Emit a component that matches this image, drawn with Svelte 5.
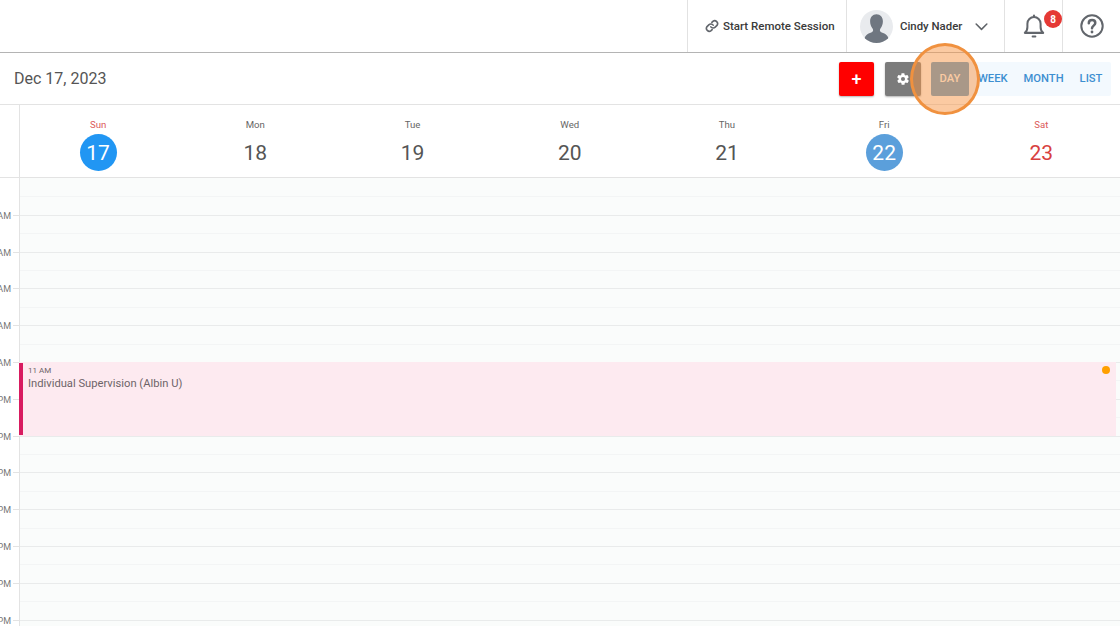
<script>
  const days = [
    { name: 'Sun', num: 17, kind: 'today', weekend: true },
    { name: 'Mon', num: 18 },
    { name: 'Tue', num: 19 },
    { name: 'Wed', num: 20 },
    { name: 'Thu', num: 21 },
    { name: 'Fri', num: 22, kind: 'marked' },
    { name: 'Sat', num: 23, weekend: true }
  ];
  const hours = ['AM','AM','AM','AM','AM','PM','PM','PM','PM','PM','PM','PM'];
</script>

<div class="page">
  <header class="topbar">
    <div class="cell remote">
      <svg class="link" viewBox="0 0 24 24" width="14" height="14" fill="none" stroke="#62666c" stroke-width="2.800" stroke-linecap="round" stroke-linejoin="round">
        <path d="M10 13.500a5 5 0 0 0 7.500.5l3-3a5 5 0 0 0-7-7l-1.700 1.700"/>
        <path d="M14 10.500a5 5 0 0 0-7.500-.5l-3 3a5 5 0 0 0 7 7l1.700-1.700"/>
      </svg>
      <span>Start Remote Session</span>
    </div>
    <div class="cell user">
      <svg class="avatar" viewBox="0 0 32 32" width="33" height="33">
        <defs><clipPath id="av"><circle cx="16" cy="16" r="16"/></clipPath></defs>
        <circle cx="16" cy="16" r="16" fill="#e9ebee"/>
        <g clip-path="url(#av)" fill="#6f7680">
          <path d="M16 4c-3.800 0-6.200 2.800-6.200 6.800 0 2.500.8 5 2.200 6.800.5.7.7 1.200.7 2 0 1-.6 1.600-1.800 2.100C7.500 23 4 24.200 3.500 32h25c-.5-7.800-4-9-7.400-10.300-1.200-.5-1.800-1.100-1.800-2.100 0-.8.2-1.300.7-2 1.400-1.800 2.200-4.300 2.200-6.800C22.200 6.800 19.800 4 16 4z"/>
        </g>
      </svg>
      <span class="name">Cindy Nader</span>
      <svg class="chev" viewBox="0 0 14 9" width="13" height="8" fill="none" stroke="#5f6368" stroke-width="1.700" stroke-linecap="round" stroke-linejoin="round"><path d="M1 1.200l6 6 6-6"/></svg>
    </div>
    <div class="cell bell">
      <svg viewBox="0 0 24 26" width="22" height="24" fill="none" stroke="#62666c" stroke-width="2.200" stroke-linejoin="round" stroke-linecap="round">
        <path d="M2 20.500h20c-1.800-1.500-2.800-3.500-2.800-6.500v-3.500a7.200 7.200 0 0 0-14.400 0V14c0 3-1 5-2.800 6.500z"/>
        <path d="M12 1.500v1.500"/>
        <path d="M10.500 24.500h3"/>
      </svg>
      <span class="badge">8</span>
    </div>
    <div class="cell help">
      <svg viewBox="0 0 24 24" width="24" height="24" fill="none" stroke="#62666c" stroke-width="2" stroke-linecap="round">
        <circle cx="12" cy="12" r="10.700"/>
        <path stroke-width="2.500" d="M8.800 9.300c0-2 1.500-3.200 3.300-3.200s3.200 1.200 3.200 2.900c0 2.600-3.300 2.700-3.300 5.300"/>
        <circle cx="12" cy="18" r="1.400" fill="#62666c" stroke="none"/>
      </svg>
    </div>
  </header>

  <div class="toolbar">
    <div class="date">Dec 17, 2023</div>
    <div class="actions">
      <button class="btn add">+</button>
      <button class="btn gear" aria-label="Settings">
        <svg viewBox="0 0 24 24" width="14" height="14" fill="#fff"><path d="M19.400 13c.1-.3.100-.7.100-1s0-.7-.1-1l2.100-1.600c.2-.2.300-.4.100-.7l-2-3.400c-.1-.2-.4-.3-.6-.2l-2.500 1c-.5-.4-1.100-.7-1.700-1l-.4-2.600c0-.3-.2-.5-.5-.5h-4c-.3 0-.5.200-.5.500l-.4 2.600c-.6.300-1.200.6-1.700 1l-2.500-1c-.2-.1-.5 0-.6.200l-2 3.400c-.1.300-.1.500.1.700L4.600 11c-.1.300-.1.700-.1 1s0 .7.100 1l-2.100 1.600c-.2.200-.3.400-.1.700l2 3.400c.1.200.4.300.6.200l2.500-1c.5.400 1.100.7 1.700 1l.4 2.600c0 .3.200.5.500.5h4c.3 0 .5-.2.500-.5l.4-2.600c.6-.3 1.200-.6 1.700-1l2.500 1c.2.100.5 0 .6-.2l2-3.400c.1-.3.100-.5-.1-.7zM12 15.500a3.500 3.500 0 1 1 0-7 3.500 3.500 0 0 1 0 7z"/></svg>
      </button>
      <div class="views">
        <span class="view active">DAY</span>
        <span class="view week">WEEK</span>
        <span class="view month">MONTH</span>
        <span class="view list">LIST</span>
      </div>
    </div>
    <div class="spot"></div>
  </div>

  <div class="dayhead">
    <div class="corner"></div>
    {#each days as d}
      <div class="day">
        <div class="dname" class:red={d.weekend}>{d.name}</div>
        <div class="dnum {d.kind ?? ''}" class:red={d.weekend && !d.kind}>{d.num}</div>
      </div>
    {/each}
  </div>

  <div class="body">
    <div class="gutter">
      {#each hours as h}
        <div class="gslot"><span class="hl">{h}</span><i class="tick"></i></div>
      {/each}
    </div>
    <div class="grid">
      {#each { length: 13 } as _}
        <div class="hour"><div class="half"></div></div>
      {/each}
      <div class="event">
        <div class="etime">11 AM</div>
        <div class="etitle">Individual Supervision (Albin U)</div>
        <span class="dot"></span>
      </div>
    </div>
  </div>
</div>

<style>
  :global(body) { margin: 0; background: #fff; overflow: hidden; }
  .page { width: 1120px; height: 626px; overflow: hidden; font-family: Roboto, "Liberation Sans", sans-serif; color: #444; }

  .topbar { height: 52px; display: flex; justify-content: flex-end; border-bottom: 1px solid #b4b4b4; }
  .cell { border-left: 1px solid #e2e2e2; display: flex; align-items: center; box-sizing: border-box; position: relative; }
  .remote { width: 159px; padding-left: 17px; gap: 4px; font-size: 11.500px; font-weight: 500; color: #3a3a3a; }
  .user { width: 158px; padding-left: 13px; }
  .name { font-size: 11.400px; font-weight: 500; color: #3a3a3a; margin-left: 7px; }
  .chev { margin-left: 13px; margin-top: 1px; }
  .bell { width: 58px; padding-left: 18px; }
  .badge { position: absolute; left: 39px; top: 10px; width: 18px; height: 18px; border-radius: 50%; background: #e53935; color: #fff; font-size: 10px; font-weight: 700; display: flex; align-items: center; justify-content: center; }
  .help { width: 58px; justify-content: center; }

  .toolbar { height: 51px; border-bottom: 1px solid #e3e3e3; display: flex; align-items: center; justify-content: space-between; padding: 0 9px 0 14px; position: relative; }
  .date { font-size: 16px; color: #555; }
  .actions { display: flex; align-items: center; }
  .btn { border: 0; padding: 0; height: 34px; border-radius: 2px; color: #fff; display: flex; align-items: center; justify-content: center; box-shadow: 0 1px 2px rgba(0,0,0,0.3); font-family: inherit; }
  .add { width: 35px; background: #ff0000; font-size: 18px; font-weight: 500; }
  .gear { width: 36px; background: #7b7b7b; margin-left: 11px; }
  .views { margin-left: 10px; display: flex; align-items: center; height: 34px; width: 180px; background: #f3f9fe; border-radius: 2px; font-size: 11.200px; font-weight: 500; color: #3d8fd1; }
  .view { display: block; }
  .active { width: 38px; height: 34px; line-height: 34px; text-align: center; background: #5a9bcb; color: #fff; border-radius: 2px; }
  .week { margin-left: 9px; }
  .month { margin-left: 16px; }
  .list { margin-left: 16px; }
  .spot { position: absolute; left: 910px; top: -10px; width: 70px; height: 72px; box-sizing: border-box; border-radius: 50%; border: 3px solid #f0913f; background: rgba(247, 150, 70, 0.5); z-index: 3; }

  .dayhead { height: 72px; display: grid; grid-template-columns: 19.500px repeat(7, 1fr); border-bottom: 1px solid #e3e3e3; }
  .corner { width: 20px; box-sizing: border-box; border-right: 1px solid #e3e3e3; }
  .day { display: flex; flex-direction: column; align-items: center; padding-top: 14px; }
  .dname { font-size: 9.600px; line-height: 12px; color: #666; }
  .dnum { width: 37px; height: 37px; margin-top: 3px; border-radius: 50%; display: flex; align-items: center; justify-content: center; font-size: 21px; color: #555; }
  .red { color: #d84040; }
  .dname.red { color: #dc5a5a; }
  .today { background: #2196f3; color: #fff; }
  .marked { background: #5b9fdb; color: #fff; }

  .body { display: grid; grid-template-columns: 20px 1fr; height: 448px; overflow: hidden; }
  .gutter { border-right: 1px solid #e3e3e3; box-sizing: border-box; width: 20px; overflow: hidden; padding-top: 1px; }
  .gslot { height: 36.800px; display: flex; justify-content: flex-end; align-items: flex-end; box-sizing: border-box; white-space: nowrap; }
  .hl { font-size: 9px; line-height: 10px; color: #777; transform: translateY(5px); margin-right: 2px; flex: none; }
  .tick { flex: none; width: 6px; height: 1px; background: #e3e3e3; }

  .grid { position: relative; background: #fafcfb; padding-top: 1px; }
  .hour { height: 36.800px; box-sizing: border-box; border-bottom: 1px solid #e9ebeb; }
  .half { height: 18.400px; box-sizing: border-box; border-bottom: 1px solid #f3f5f5; }

  .event { position: absolute; left: -1px; top: 184px; width: 1097px; height: 74px; box-sizing: border-box; background: #fdeaf0; padding: 4px 0 0 9px; color: #6d6468; }
  .event::before { content: ""; position: absolute; left: 0; top: 1px; bottom: 1px; width: 4px; background: #d81b60; }
  .etime { font-size: 8px; line-height: 10px; }
  .etitle { font-size: 11.200px; line-height: 15px; }
  .dot { position: absolute; right: 6px; top: 4px; width: 8px; height: 8px; border-radius: 50%; background: #ffa000; }
</style>
